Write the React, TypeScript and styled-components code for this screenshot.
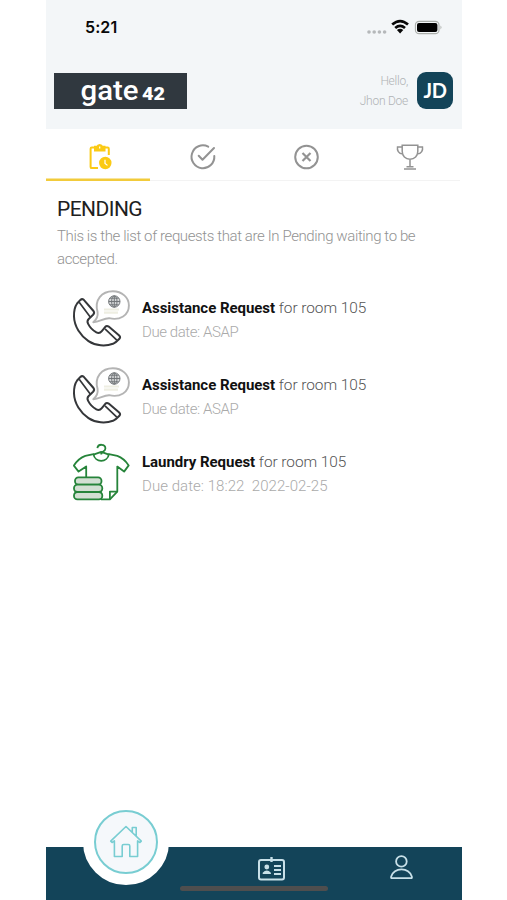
import React from "react";
import styled, { createGlobalStyle } from "styled-components";

const GlobalStyle = createGlobalStyle`
  * { box-sizing: border-box; }
  body { margin: 0; background: #fff; font-family: Roboto, "Liberation Sans", sans-serif; }
  svg { display: block; flex: none; }
  h1, p { margin: 0; }
`;

const Screen = styled.main`
  width: 416px;
  height: 900px;
  margin-left: 46px;
  display: flex;
  flex-direction: column;
  background: #fff;
`;

const Header = styled.header`
  height: 129px;
  background: #f3f6f8;
`;

const StatusBar = styled.div`
  height: 72px;
  padding: 17px 19px 0 39px;
  display: flex;
  align-items: flex-start;
  justify-content: space-between;
`;

const Clock = styled.span`
  font: 600 16px/21px Inter, sans-serif;
  letter-spacing: 0.1px;
  color: #080808;
`;

const Brand = styled.div`
  height: 37px;
  padding: 0 9px 0 8px;
  display: flex;
  align-items: center;
  justify-content: space-between;
`;

const Account = styled.div`
  display: flex;
  align-items: center;
  gap: 9px;
`;

const Greeting = styled.div`
  padding-top: 2px;
  font-size: 12px;
  font-weight: 300;
  line-height: 19.5px;
  letter-spacing: -0.25px;
  text-align: right;
  color: #b0b3b5;
`;

const Avatar = styled.div`
  width: 36px;
  height: 37px;
  border-radius: 9px;
  background: #134459;
  color: #fff;
  font: 700 20px/37px Lato, sans-serif;
  letter-spacing: -0.4px;
  text-align: center;
`;

const Tabs = styled.nav`
  display: grid;
  grid-template-columns: 104px repeat(3, 103.4px);
  height: 52px;
  padding-right: 1px;
`;

const Tab = styled.button<{ $active?: boolean }>`
  border: 0;
  padding: 3px 0 0 ${(p) => (p.$active ? 4 : 3)}px;
  background: none;
  display: flex;
  align-items: center;
  justify-content: center;
  color: ${(p) => (p.$active ? "#fbca14" : "#939393")};
  box-shadow: inset 0 ${(p) => (p.$active ? "-2.5px #f2cb3b" : "-1px #f3f3f3")};
`;

const Content = styled.section`
  flex: 1;
  padding: 14px 11px;
`;

const Title = styled.h1`
  font-size: 21px;
  font-weight: 400;
  line-height: 28px;
  letter-spacing: -0.55px;
  color: #202020;
`;

const Description = styled.p`
  width: 385px;
  margin-top: 2px;
  font-size: 15px;
  font-weight: 300;
  line-height: 22.5px;
  letter-spacing: -0.39px;
  color: #929292;
`;

const RequestList = styled.div`
  margin-top: 13px;
`;

const RequestRow = styled.article`
  height: 77px;
  padding: 6px 0 0 15px;
  display: flex;
  gap: 11px;
`;

const RequestText = styled.div`
  padding-top: 7px;
  line-height: 24px;
  white-space: pre;
`;

const Summary = styled.p`
  font-size: 15.4px;
  font-weight: 300;
  letter-spacing: -0.04px;
  color: #555;
`;

const Kind = styled.strong`
  font-size: 15px;
  font-weight: 700;
  color: #111;
`;

const Due = styled.p<{ $tight?: boolean }>`
  font-size: 15px;
  font-weight: 300;
  letter-spacing: ${(p) => (p.$tight ? "-0.42px" : "0.05px")};
  color: #aaa;
`;

const BottomBar = styled.footer`
  position: relative;
  height: 53px;
  background: #134459;
  display: flex;
  color: #c8e0e8;
`;

const HomeButton = styled.button`
  position: absolute;
  left: 37px;
  top: -48px;
  width: 86px;
  height: 86px;
  padding: 0;
  border: 11px solid #fff;
  border-radius: 50%;
  background: #fff;
`;

const HomeRing = styled.span`
  width: 64px;
  height: 64px;
  border: 2.5px solid #78cdd2;
  border-radius: 50%;
  background: #f5f8fb;
  display: flex;
  align-items: center;
  justify-content: center;
`;

const BarButton = styled.button<{ $width: number }>`
  flex: 0 0 ${(p) => p.$width}px;
  padding: 7px 0 0;
  border: 0;
  background: none;
  color: inherit;
  display: flex;
  justify-content: flex-end;
`;

const HomeIndicator = styled.div`
  position: absolute;
  left: 134px;
  top: 39px;
  width: 148px;
  height: 5px;
  border-radius: 3px;
  background: #4e4e4e;
`;

const StatusIcons = () => (
  <svg width="78" height="20" viewBox="0 0 78 20">
    <g fill="#b5b8ba">
      <circle cx="4" cy="15" r="1.8" /><circle cx="9.2" cy="15" r="1.8" />
      <circle cx="14.4" cy="15" r="1.8" /><circle cx="19.6" cy="15" r="1.8" />
    </g>
    <g fill="none" stroke="#080808" strokeWidth="2.7">
      <path d="M27.2 7.6Q35.1.7 43 7.6" />
      <path d="M30.2 11Q35.1 6.9 40 11" />
    </g>
    <path d="m31.9 13 3.2 3.4 3.2-3.4Q35.1 10.3 31.9 13Z" fill="#080808" />
    <rect x="50.4" y="4.4" width="23.6" height="12.2" rx="3.7" fill="#f3f6f8" stroke="#aaaeaa" strokeWidth="1.1" />
    <rect x="52" y="6" width="20.4" height="9" rx="2" fill="#020202" />
    <path d="M75.5 8.6q2 1.9 0 3.8Z" fill="#aaaeaa" />
  </svg>
);

const Logo = () => (
  <svg width="133" height="36" viewBox="0 0 133 36" role="img">
    <rect width="133" height="36" fill="#30383f" />
    <g fill="#fff" fontFamily="Roboto, sans-serif">
      <text x="26.5" y="27" fontSize="28.5" fontWeight="500" textLength="58" lengthAdjust="spacingAndGlyphs">gate</text>
      <text x="88" y="26.5" fontSize="18.5" fontWeight="900" textLength="23" lengthAdjust="spacingAndGlyphs">42</text>
    </g>
  </svg>
);

const ClipboardIcon = () => (
  <svg width="26" height="28" viewBox="0 0 26 28" fill="none" stroke="currentColor" strokeWidth="2">
    <path d="M8 4.5H4.8q-1.2 0-1.2 1.2v18.2q0 1.2 1.2 1.2H11M17 4.5h3.6q1.2 0 1.2 1.2V12" />
    <path d="M8 3.8h2.2a2.6 2.6 0 0 1 5 0H17.5v3.8H8Z" fill="currentColor" />
    <circle cx="18.3" cy="20" r="5.2" fill="currentColor" />
    <path d="M18 16.7v3.7l2.5 2M12.7 3.6v2" stroke="#fff" strokeWidth="1.2" />
  </svg>
);

const CheckIcon = () => (
  <svg width="28" height="28" viewBox="0 0 28 28" fill="none" stroke="currentColor" strokeWidth="2" strokeLinecap="round" strokeLinejoin="round">
    <path d="M19.2 3.7A11.4 11.4 0 1 0 25.3 13" />
    <path d="m9.7 12.8 3.8 4L25 5" />
  </svg>
);

const CancelIcon = () => (
  <svg width="28" height="28" viewBox="0 0 28 28" fill="none" stroke="currentColor" strokeWidth="2">
    <circle cx="13.5" cy="14" r="11.3" />
    <path d="m9.5 10 8 8M17.5 10l-8 8" strokeWidth="2.2" />
  </svg>
);

const TrophyIcon = () => (
  <svg width="28" height="28" viewBox="0 0 28 28" fill="none" stroke="currentColor" strokeWidth="1.5">
    <path d="M6.2 2.3h15.6v6c0 4.7-3.2 8-7.8 8s-7.8-3.3-7.8-8ZM6.2 4H1.5c-.5 3.3.8 6.6 5.4 7M21.8 4h4.7c.5 3.3-.8 6.6-5.4 7M14 16.3v7.5M10.5 23.8h7M8 26h12" />
  </svg>
);

const PhoneIcon = () => (
  <svg width="59" height="59" viewBox="0 0 59 59" fill="none" strokeLinejoin="round">
    <g stroke="#35373a" strokeWidth="2">
      <path d="M11.8 10.8q-1.8-1.4-3.4.1l-3.3 3.6Q1.8 19 2 27.5C2.3 37.4 8.4 46.7 16.5 52.1c7.4 4.9 17 5.4 24.5 2.7q3-1.3 6.4-5 1.5-1.7-.2-3.3L36.7 37.6q-1.9-1.3-3.4.2l-3.5 4.4q-2.3 2.8-5.4 1.2c-3.6-2-6.6-5.2-8.4-8.8q-1.3-2.7.7-4.6l4.4-4.2q1.8-1.8.4-3.8Z" />
      <path d="m7.2 13.2 11.2 15M33 39.8l11.8 11.4" strokeWidth="1.7" />
    </g>
    <path d="M21.3 33.3c3.7-3.2 4.8-6.5 4.3-10.2C22 11 29.8 2.3 40.8 2.3c9.2 0 16.1 6.2 16.1 14.2 0 9.7-8.9 15.3-19.7 12.7-5.4-.2-9.6 3.7-15.9 4.1Z" stroke="#b4b4b4" strokeWidth="1.9" />
    <g stroke="#73777a" strokeWidth="1">
      <circle cx="42.3" cy="12.5" r="5.7" fill="#d4d6d7" />
      <ellipse cx="42.3" cy="12.5" rx="2.7" ry="5.7" />
      <path d="M36.6 12.5H48M38 9.2h8.6M38 15.8h8.6M42.3 7v11" />
    </g>
    <path d="M32 20.5h15M32 23.6h14" stroke="#eeeee2" strokeWidth="2.2" />
  </svg>
);

const LaundryIcon = () => (
  <svg width="59" height="59" viewBox="0 0 59 59" fill="none" stroke="#26843a" strokeWidth="1.8" strokeLinejoin="round">
    <path d="M25.4 5.2c.4-4.6 8-4.6 8 .2 0 3.2-4.2 2.9-4.2 6.2M21.5 11.7l7.7-2.8 7.7 2.8" />
    <path d="M14.2 34V23.4l-7.6 5.2-4.7-6q4.7-7.4 11.4-9.7l8.2-1.8c1.3 8.9 14.1 8.9 15.4 0l8.4 1.8q6.6 2.3 11.4 9.5l-4.6 6.2-6.8-5v25l-7.4 7.7H29" />
    <path d="M45.3 48.6h-7.4v7.7" />
    <g fill="#d3dfd3">
      <rect x="3" y="34.4" width="26.5" height="7.3" rx="3.4" />
      <rect x="2" y="41.7" width="28.3" height="7.3" rx="3.4" />
      <rect x="2" y="49" width="28.3" height="7.3" rx="3.4" />
    </g>
  </svg>
);

const HouseIcon = () => (
  <svg width="34" height="34" viewBox="0 0 34 34" fill="none" stroke="#78cdd2" strokeWidth="1.6" strokeLinejoin="round">
    <path d="M1.7 16.1 17 1.5l15.3 14.6-1.4 1.4-2.3-1.6V31.5h-7.8V21q0-1.5-1.5-1.5h-4.6q-1.5 0-1.5 1.5v10.5H5.4V15.9l-2.3 1.6ZM23.3 7V2.5h3.9v8.2" />
  </svg>
);

const BadgeIcon = () => (
  <svg width="30" height="28" viewBox="0 0 30 28" fill="none" stroke="currentColor" strokeWidth="2">
    <rect x="2" y="6" width="25" height="19.5" rx="2" />
    <path d="M14.5 3v5" strokeWidth="2.4" />
    <circle cx="9.8" cy="13" r="2.4" fill="currentColor" stroke="none" />
    <path d="M5.7 20v-1.2q4.1-4.5 8.2 0V20Z" fill="currentColor" stroke="none" />
    <path d="M17 12h7M17 16h7M17 20h7" strokeWidth="1.8" />
  </svg>
);

const PersonIcon = () => (
  <svg width="26" height="28" viewBox="0 0 26 28" fill="none" stroke="currentColor" strokeWidth="1.8">
    <circle cx="13.4" cy="7.4" r="5.3" />
    <path d="M4 24.2h19q1.3 0 .8-1.7c-3.4-9.5-17.2-9.5-20.6 0Q2.7 24.2 4 24.2Z" />
  </svg>
);

const requests = [
  { kind: "Assistance Request", due: "ASAP", icon: PhoneIcon },
  { kind: "Assistance Request", due: "ASAP", icon: PhoneIcon },
  { kind: "Laundry Request", due: "18:22  2022-02-25", icon: LaundryIcon },
];

export default function App() {
  return (
    <>
      <GlobalStyle />
      <Screen>
        <Header>
          <StatusBar>
            <Clock>5:21</Clock>
            <StatusIcons />
          </StatusBar>
          <Brand>
            <Logo />
            <Account>
              <Greeting>Hello,<br />Jhon Doe</Greeting>
              <Avatar>JD</Avatar>
            </Account>
          </Brand>
        </Header>
        <Tabs>
          <Tab $active><ClipboardIcon /></Tab>
          <Tab><CheckIcon /></Tab>
          <Tab><CancelIcon /></Tab>
          <Tab><TrophyIcon /></Tab>
        </Tabs>
        <Content>
          <Title>PENDING</Title>
          <Description>This is the list of requests that are In Pending waiting to be accepted.</Description>
          <RequestList>
            {requests.map(({ kind, due, icon: Icon }, i) => (
              <RequestRow key={i}>
                <Icon />
                <RequestText>
                  <Summary><Kind>{kind}</Kind> for room 105</Summary>
                  <Due $tight={due === "ASAP"}>Due date: {due}</Due>
                </RequestText>
              </RequestRow>
            ))}
          </RequestList>
        </Content>
        <BottomBar>
          <BarButton $width={241}><BadgeIcon /></BarButton>
          <BarButton $width={127}><PersonIcon /></BarButton>
          <HomeButton><HomeRing><HouseIcon /></HomeRing></HomeButton>
          <HomeIndicator />
        </BottomBar>
      </Screen>
    </>
  );
}
